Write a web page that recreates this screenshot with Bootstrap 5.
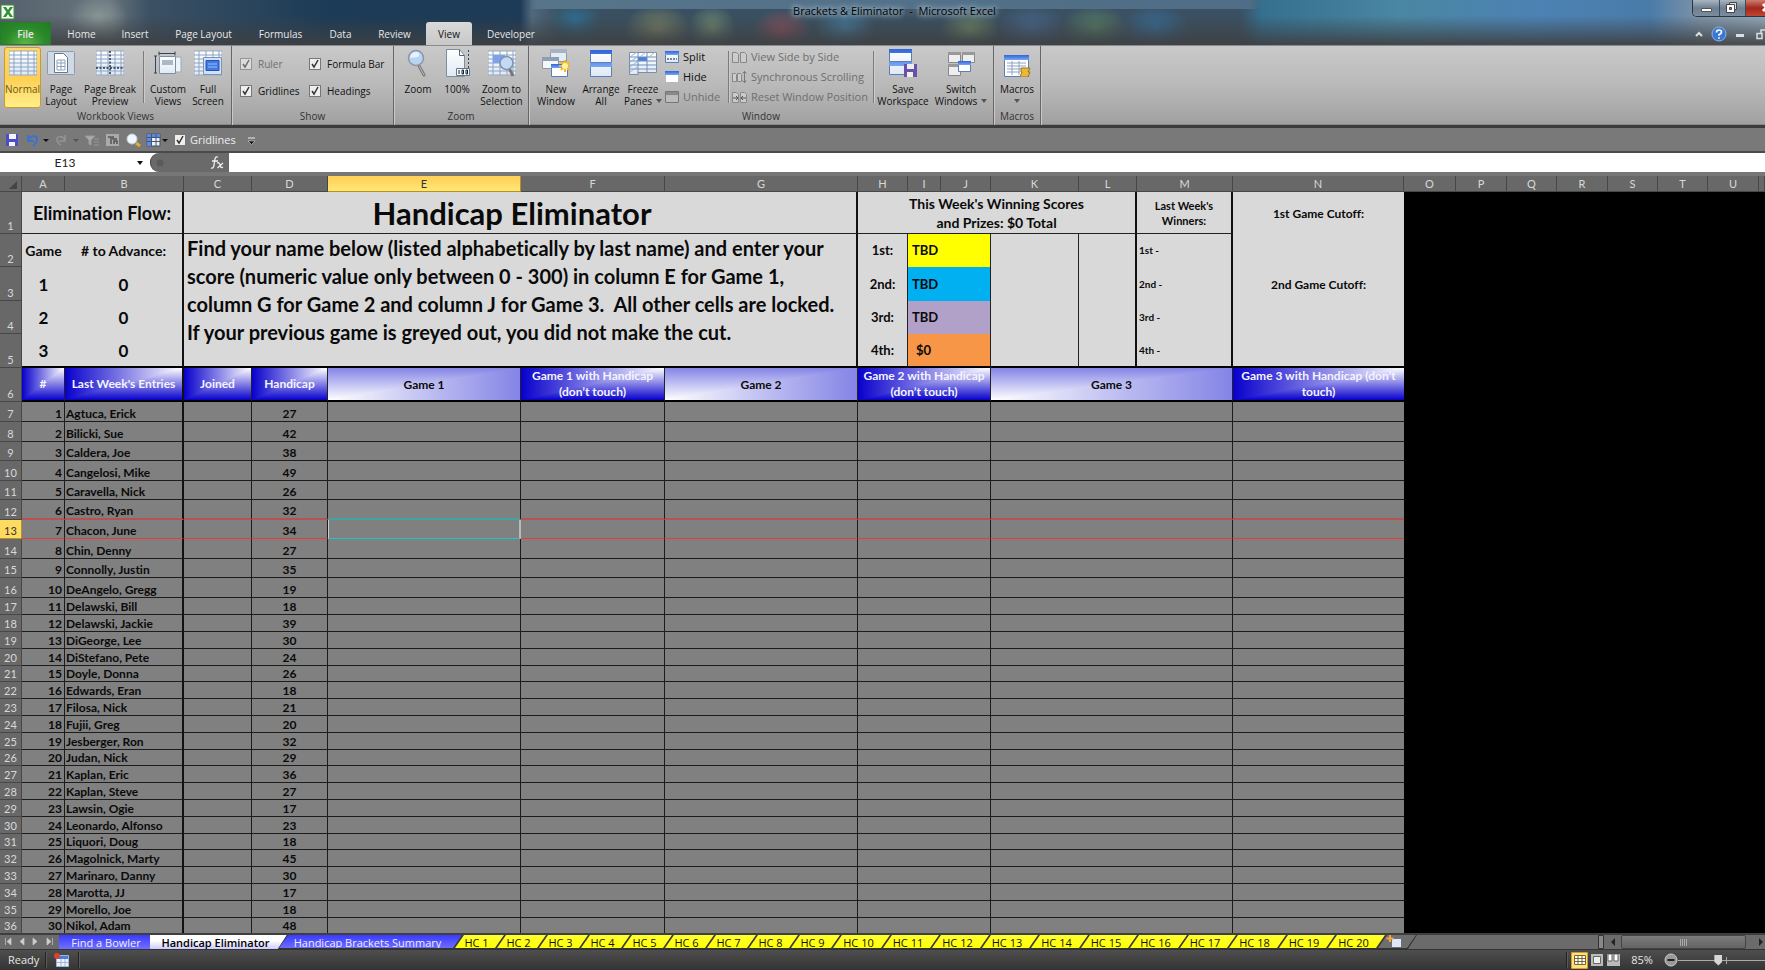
<!DOCTYPE html>
<html lang="en">
<head>
<meta charset="utf-8">
<title>Brackets &amp; Eliminator - Microsoft Excel</title>
<meta name="viewport" content="width=device-width, initial-scale=1">
<link rel="stylesheet" href="https://cdn.jsdelivr.net/npm/bootstrap@5.3.0/dist/css/bootstrap.min.css">
<style>
:root{--ui:"Open Sans","Noto Sans",sans-serif;--cell:Lato,"Open Sans",sans-serif}
body{font:11px/12px var(--ui);color:#111;background:#797979}
button{font:inherit;color:inherit;background:none;border:0;padding:0}
svg{display:block;flex:none}
/* window frame */
.frame{height:45px;background:
 linear-gradient(to bottom,transparent 35%,rgba(62,64,66,.85) 95%),
 radial-gradient(30px 24px at 98px 18px,#a9b8ae88,transparent),
 linear-gradient(to right,transparent 530px,#56748a 536px,#4f6d86 1250px,transparent 1262px) top/100% 9px no-repeat,
 radial-gradient(26px 20px at 575px 20px,#2f6d8f,transparent),
 radial-gradient(34px 26px at 658px 30px,#8c9168cc,transparent),
 radial-gradient(24px 24px at 712px 28px,#7d9a78cc,transparent),
 radial-gradient(30px 22px at 782px 31px,#a4505dcc,transparent),
 radial-gradient(30px 24px at 845px 28px,#4787b0cc,transparent),
 radial-gradient(30px 22px at 970px 30px,#7f9a68cc,transparent),
 radial-gradient(34px 24px at 1032px 28px,#4a6d9ccc,transparent),
 radial-gradient(34px 24px at 1095px 28px,#5f8a68cc,transparent),
 radial-gradient(34px 24px at 1155px 28px,#3676a8cc,transparent),
 linear-gradient(to right,#55616c 0,#68747d 110px,#3b5063 150px,#1c3b56 330px,#1d3a56 520px,#50697d 532px,#3a5060 560px,#3b5062 1240px,#35708f 1262px,#4a87a3 1400px,#4c82b4 1540px,#4a7ba8 1650px,#7d93a8 1700px,#93a9bb)}
.caption{height:22px}
.caption h1{font:11px/22px var(--ui);color:#000;margin:0;text-shadow:0 0 4px #a9bfce,0 0 6px #a9bfce,0 0 9px #a9bfce;white-space:pre}
.capbtns{width:73px;height:17px;border:1px solid #2a3540;border-top:0;border-right:0;border-radius:0 0 0 5px;box-shadow:inset 1px -1px #b5c2cd}
.capbtns button{width:26px;background:linear-gradient(#a9b6c2,#6d7f91 50%,#7a8c9e)}
.capbtns button+button{border-left:1px solid #3d4a57}
.capbtns .shut{background:linear-gradient(#cf7d72,#a2281b 50%,#c2452f)}
.tabs{height:23px;color:#e8e8e8;font-size:10px}
.tabs button{flex:none;line-height:22px;text-align:center}
.tabs .file{width:51px;font-weight:600;background:radial-gradient(at 50% 100%,#5fb84a,#2b8a2b 55%,#1f7a25);border-radius:3px 3px 0 0;box-shadow:inset 0 0 0 1px #2c7a2c}
.tabs .on{color:#111;background:linear-gradient(#d9d9d9,#c8c8c8);border-radius:3px 3px 0 0}
/* ribbon */
.ribbon{height:80px;background:linear-gradient(#c9c9c9,#b9b9b9 50%,#a0a0a0);border-top:1px solid #8a8a8a;box-shadow:inset 0 -1px #888}
.grp{border-right:1px solid #666;box-shadow:1px 0 #c9c9c9;padding-top:1px}
.grp>h2{font:10px/17px var(--ui);color:#333;margin:0;height:17px;text-align:center}
.rb{flex:none;width:40px;height:61px;display:flex;flex-direction:column;align-items:center;white-space:nowrap;font-size:10px}
.rb svg{width:28px;height:28px;margin:2px 0 6px}
.rb.hot{width:37px;background:linear-gradient(#ffd968,#fdcf55 50%,#fff08a);box-shadow:inset 0 0 0 1px #c79a37;border-radius:3px;color:#6d5317}
.rule{width:1px;height:52px;margin-top:4px;background:#7c7c7c;box-shadow:1px 0 #ccc}
.sm{display:flex;align-items:center;gap:4px;height:20px;white-space:nowrap}
.checks{padding-top:7px;gap:7px;font-size:10px}
.checks .sm{gap:6px}
.off{color:#6f6f6f}
.ck{appearance:none;width:12px;height:12px;margin:0;border:1px solid #777;background:#eee;flex:none}
.ck:checked{background:#eee url("data:image/svg+xml,%3Csvg xmlns='http://www.w3.org/2000/svg' viewBox='0 0 10 10'%3E%3Cpath d='M2 5l2 3 4-7' fill='none' stroke='%23333' stroke-width='1.5'/%3E%3C/svg%3E")}
.ck:disabled{opacity:.6}
.qat{height:28px;border-top:3px solid #3c3c3c;border-bottom:2px solid #4a4a4a;background:#797979;color:#eee}
.fx{height:23px;background:#686868;border-bottom:4px solid #777;box-shadow:inset 0 -1px #4a4a4a}
.fx input{border:0;background:#fff;padding:1px 0 0;outline:0;border-radius:0;font:12px/18px Lato,sans-serif;color:#222}
.fx .nm{width:130px;text-align:center}
.fx .pill{width:79px;background:#fff}
.fx .pill>div{background:#6a6a6a;border-radius:9px 0 0 9px;border-left:1px solid #444}
.tri{width:0;height:0;border:3px solid transparent;border-top:4px solid #111;border-bottom:0;flex:none}
.tri.dim{border-top-color:#555}
/* sheet */
.sheet{min-height:0}
.xl{table-layout:fixed;width:100%;border-collapse:separate;border-spacing:0;font:bold 13px/15px var(--cell);font-variant-ligatures:none;color:#0a0a0a}
.xl td,.xl th{padding:0;white-space:nowrap;overflow:hidden}
.xl .ch th{height:16px;background:#686868;color:#d8d8d8;font:11px/15px Lato,sans-serif;text-align:center;border-right:1px solid #474747;border-bottom:1px solid #474747}
.xl .ch .sel{background:linear-gradient(#ffcf56,#ffe873);color:#333;border-color:#b98e2d}
.xl .rh{background:#686868;color:#d8d8d8;font:11px/14px Lato,sans-serif;text-align:center;vertical-align:bottom;border-right:1px solid #474747;border-bottom:1px solid #474747}
.xl .void{background:#000;border:0}
.g td{background:#d9d9d9;vertical-align:middle}
.c{text-align:center}
.r2{border-right:2px solid #111}
.r1{border-right:1px solid #222}
.b1{border-bottom:1px solid #222}
.b2{border-bottom:2px solid #000}
.xl .h34{height:34px}.xl .h33{height:33px}.xl .h42{height:42px}
.g td.dk{color:#f4f4ff;background:linear-gradient(to left,#fff,#0800cc),linear-gradient(#fff,#0800cc);background-blend-mode:darken;font-size:12px;line-height:16px}
.g td.lt{background:linear-gradient(to right,#fff,#8484e6),linear-gradient(to top,#fff,#8484e6);background-blend-mode:darken;font-size:12px}
.xl .intro{font-size:20px;line-height:28px;vertical-align:top;padding-left:3px}
.xl .flow{font-size:18px;line-height:20px}
.xl .banner{font-size:31px;line-height:36px;padding-right:16px}
.xl .prize{font-size:14px;line-height:19px}
.xl .lastwk{font-size:11px}
.xl .cut{font-size:12px}
.xl .sml{font-size:10px;padding-left:2px}
.xl .hd{font-size:14px}
.xl .big{font-size:17px}
.d tr{height:20px}
.d tr:nth-child(-n+9):nth-child(2n+3){height:19px}
.d tr:nth-child(n+11){height:17px}
.d tr:nth-child(5n+15){height:16px}
.d td{background:#808080;border-right:1px solid #1c1c1c;border-bottom:1px solid #1c1c1c;vertical-align:bottom;font-size:12px;line-height:15px}
.d td.nmc{border-right:2px solid #111;padding-left:1px}
.d td.last{border-right:0}
.d td.num{text-align:right;padding-right:2px}
.d .pre td{border-bottom:2px solid #b85252}
.d .cur td{border-bottom-color:#e83a3a}
.d .pre td.ent{border-bottom-color:#41a3a3}
.d .cur td.ent{border-bottom-color:#20c4c4;border-right:2px solid #bbb;border-left:1px solid #ccc}
.d .cur .rh{background:#ffdc60;color:#333;border-color:#b98e2d}
/* sheet tabs and status bar */
.strip{height:17px;background:#6b6b6b;border-top:2px solid #3e3e3e;border-bottom:1px solid #333}
.edge{flex:none;margin-right:-9px;height:14px;background:#333;clip-path:polygon(9px 0,100% 0,calc(100% - 9px) 100%,0 100%)}
.edge button{width:100%;height:14px;line-height:15px;font-size:11px;padding-right:6px;background:linear-gradient(#ffff30,#ff0);clip-path:polygon(10px 0,calc(100% - 1px) 0,calc(100% - 10px) 13px,1px 13px);color:#111;text-align:center;display:block}
.edge.blue button{background:linear-gradient(#3a3aff,#7070ff);color:#eef}
.edge.flat,.edge.flat button{clip-path:polygon(0 0,100% 0,calc(100% - 9px) 100%,0 100%)}
.edge.act button{background:linear-gradient(#fff 40%,#ccccff);color:#000;font-weight:600}
.edge.new button{background:#6f6f6f}
.status{height:20px;background:linear-gradient(#4e4e4e,#343434);color:#e6e6e6}
.status .bar{width:1px;height:16px;background:#222;box-shadow:1px 0 #5a5a5a;flex:none}
.vw{width:17px;height:17px;display:flex;align-items:center;justify-content:center}
.vw.hot{background:#ffe07a;box-shadow:inset 0 0 0 1px #d39b2c;border-radius:2px}
.zoomer{appearance:none;width:87px;height:12px;background:linear-gradient(#aaa,#aaa) 0 6px/100% 1px no-repeat,linear-gradient(#aaa,#aaa) 48px 3px/1px 7px no-repeat}
.zoomer::-webkit-slider-thumb{appearance:none;width:8px;height:11px;background:#d6d6d6;clip-path:polygon(0 0,100% 0,100% 65%,50% 100%,0 65%)}
.hthumb{width:125px;height:14px;background:linear-gradient(#7c7c7c,#636363);border:1px solid #444;border-radius:2px}
</style>
</head>
<body class="vh-100 d-flex flex-column overflow-hidden">

<svg width="0" height="0" class="position-absolute" aria-hidden="true">
 <defs>
  <linearGradient id="gw" x2="0" y2="1"><stop stop-color="#fff"/><stop offset="1" stop-color="#dfe9f5"/></linearGradient>
  <linearGradient id="gb" x2="0" y2="1"><stop stop-color="#2f66d8"/><stop offset="1" stop-color="#7aa5f2"/></linearGradient>
  <symbol id="lens" viewBox="0 0 28 28"><path d="M15 17l5 9" stroke="#777" stroke-width="3" stroke-linecap="round"/><path d="M15 17l5 9" stroke="#bbb" stroke-linecap="round"/><circle cx="12" cy="9" r="7.5" fill="#b9d4f3" stroke="#8a97a8" stroke-width="1.5"/><path d="M6 9a6 6 0 0 1 6-6c3 0 4 2 3 4s-6 1-9 2z" fill="#e6f2ff"/></symbol>
  <symbol id="sheet" viewBox="0 0 28 28"><path d="M0 2h28v24H0z" fill="url(#gw)" stroke="#9ab"/><path d="M0 6h28M0 10h28M0 14h28M0 18h28M0 22h28M5 2v24M12 2v24M19 2v24M25 2v24" stroke="#8ba3c4" stroke-width="1"/></symbol>
  <symbol id="win" viewBox="0 0 14 12"><path d="M.5.5h13v11H.5z" fill="url(#gw)" stroke="#5a7fb8"/><path d="M0 0h14v4H0z" fill="url(#gb)"/></symbol>
 </defs>
</svg>

<header class="frame flex-shrink-0">
 <div class="caption d-flex position-relative">
  <svg width="16" height="16" viewBox="0 0 16 16" class="mt-1"><path d="M1 1h13v14H1z" fill="#f2f8ee" stroke="#3e8e3e"/><path d="M3 3h3l2 3 2-3h3L9.500 8l3.500 5h-3L8 10l-2 3H3l3.500-5z" fill="#2f8f33"/></svg>
  <h1 class="flex-fill text-center ps-2">Brackets &amp; Eliminator  -  Microsoft Excel</h1>
  <div class="capbtns position-absolute top-0 end-0 d-flex overflow-hidden">
   <button class="flex-shrink-0" aria-label="Minimize"><svg width="24" height="16"><path d="M8.500 8.500h10v3h-10z" fill="#fff" stroke="#555"/></svg></button>
   <button class="flex-shrink-0" aria-label="Restore"><svg width="24" height="16"><path d="M9.500 2.500h7v7h-7z" fill="#ddd" stroke="#444"/><path d="M6.500 4.500h8v8h-8z" fill="#fff" stroke="#444"/><path d="M9.500 7.500h2v2h-2z" stroke="#444" fill="#889"/></svg></button>
   <button class="flex-shrink-0 shut" aria-label="Close"><svg width="24" height="16"><path d="M17 4l7 7M24 4l-7 7" stroke="#fff" stroke-width="3"/></svg></button>
  </div>
 </div>
 <nav class="tabs d-flex">
  <button class="file">File</button>
  <button style="width:61px">Home</button>
  <button style="width:46px">Insert</button>
  <button style="width:91px">Page Layout</button>
  <button style="width:63px">Formulas</button>
  <button style="width:57px">Data</button>
  <button style="width:51px">Review</button>
  <div style="width:6px"></div>
  <button class="on" style="width:46px">View</button>
  <button style="width:78px">Developer</button>
  <div class="ms-auto d-flex align-items-center overflow-hidden" style="width:73px">
   <svg width="73" height="20" viewBox="0 0 73 20"><path d="M4 12l3-3 3 3" fill="none" stroke="#ddd" stroke-width="2"/><circle cx="27" cy="10" r="7" fill="#3c78d2" stroke="#8bb3ec"/><path d="M24.500 8.500q0-2.500 2.500-2.500t2.500 2q0 1.500-2.500 2.800v1M27 13.200v1.600" fill="none" stroke="#fff" stroke-width="1.700"/><path d="M44 10h8v3h-8z" fill="#ddd"/><path d="M65 9.500h5v5h-5zM69 9V6h5" fill="none" stroke="#ddd" stroke-width="1.500"/></svg>
  </div>
 </nav>
</header>

<section class="ribbon d-flex flex-shrink-0">
 <div class="grp d-flex flex-column" style="width:232px">
  <div class="d-flex flex-fill ps-1">
   <button class="rb hot"><svg><use href="#sheet"/></svg>Normal</button>
   <button class="rb"><svg viewBox="0 0 28 28"><rect x=".5" y="2.500" width="27" height="23" rx="1" fill="#cfdae6" stroke="#8d9cad"/><path d="M7.500 4.500h9l4 4v15h-13z" fill="#fff" stroke="#66788e"/><path d="M10 11h8v10h-8zM10 14h8M10 17.500h8M14 11v10" fill="none" stroke="#8fa2ba"/></svg>Page<br>Layout</button>
   <button class="rb" style="width:58px"><svg viewBox="0 0 28 28"><use href="#sheet"/><path d="M14 2v24M0 19h28" stroke="#234" stroke-width="1.500" stroke-dasharray="2 1.500"/></svg>Page Break<br>Preview</button>
   <div class="rule mx-1"></div>
   <button class="rb"><svg viewBox="0 0 28 28"><path d="M8 8h19v15H8z" fill="#eef3f8" stroke="#9ab"/><path d="M5.500 7.500h16v17h-16z" fill="url(#gw)" stroke="#7d8ea3"/><path d="M8 11h11v5H8z" fill="#aab8c8"/><path d="M5 4.500h16M5 2.500v4M21 2.500v4M1.500 7v17M0 7h3M0 24h3" stroke="#345" fill="none"/></svg>Custom<br>Views</button>
   <button class="rb"><svg viewBox="0 0 28 28"><use href="#sheet"/><path d="M9.500 8.500h18v17h-18z" fill="#d3e0f3" stroke="#7d93b5"/><path d="M12 11.500h13v10H12z" fill="#3f7be2" stroke="#2253b5"/><path d="M14 15h9M14 18h9" stroke="#9ec1ff"/></svg>Full<br>Screen</button>
  </div>
  <h2>Workbook Views</h2>
 </div>
 <div class="grp d-flex flex-column" style="width:162px">
  <div class="flex-fill d-flex ps-2 gap-2">
   <div class="checks d-flex flex-column" style="width:61px">
    <label class="sm off"><input type="checkbox" class="ck" checked disabled>Ruler</label>
    <label class="sm"><input type="checkbox" class="ck" checked>Gridlines</label>
   </div>
   <div class="checks d-flex flex-column">
    <label class="sm"><input type="checkbox" class="ck" checked>Formula Bar</label>
    <label class="sm"><input type="checkbox" class="ck" checked>Headings</label>
   </div>
  </div>
  <h2>Show</h2>
 </div>
 <div class="grp d-flex flex-column" style="width:135px">
  <div class="d-flex flex-fill ps-1">
   <button class="rb"><svg><use href="#lens"/></svg>Zoom</button>
   <button class="rb" style="width:38px"><svg viewBox="0 0 28 28"><path d="M25.500 1v26" stroke="#345" stroke-dasharray="2 2"/><path d="M3.500.5h13l5 6v21h-18z" fill="url(#gw)" stroke="#7d8ea3"/><path d="M16.500.5v6h5" fill="none" stroke="#567"/><path d="M13.500 19.500h13v7h-13z" fill="#fff" stroke="#678"/><path d="M16 21v4M19 21h1.500v4H19zM23 21h1.500v4H23z" fill="none" stroke="#123"/></svg>100%</button>
   <button class="rb" style="width:51px"><svg viewBox="0 0 28 28"><use href="#sheet"/><path d="M5 6h12v8H5z" fill="#7ba2ea"/><path d="M21 19l4 8" stroke="#777" stroke-width="3"/><circle cx="18.500" cy="14" r="6.500" fill="#c2daf5" stroke="#8593a5" stroke-width="1.500"/></svg>Zoom to<br>Selection</button>
  </div>
  <h2>Zoom</h2>
 </div>
 <div class="grp d-flex flex-column" style="width:465px">
  <div class="d-flex flex-fill ps-1">
   <button class="rb" style="width:46px"><svg viewBox="0 0 28 28"><path d="M8.500.5h16v12h-16z" fill="#e6ecf3" stroke="#8b98a8"/><path d="M8 0h17v4H8z" fill="#a5b3c5"/><path d="M.5 8.500h16v11H.5z" fill="#f5f8fb" stroke="#8b98a8"/><path d="M0 8h17v4H0z" fill="#8e9fb5"/><path d="M9.500 15.500h16v12h-16z" fill="#fff" stroke="#5a7fb8"/><path d="M9 15h17v4H9z" fill="url(#gb)"/><path d="M23 11v12M17 17h12M19 13l8 8M27 13l-8 8" stroke="#f5b81e" stroke-width="2"/><circle cx="23" cy="17" r="3" fill="#fff3a0"/></svg>New<br>Window</button>
   <button class="rb" style="width:44px"><svg viewBox="0 0 28 28"><path d="M3.500 1.500h21v12h-21zM3.500 14.500h21v13h-21z" fill="url(#gw)" stroke="#5a7fb8"/><path d="M3 1h22v4H3zM3 14h22v4H3z" fill="url(#gb)"/></svg>Arrange<br>All</button>
   <button class="rb"><svg viewBox="0 0 28 28"><path d="M.5 3.500h27v20H9v2H.500z" fill="url(#gw)" stroke="#7d8ea3"/><path d="M9 8h9v4H9z" fill="#4a7fe0"/><path d="M0 8h28M0 12h28M0 16h28M0 20h28M9 3v21M18 3v21" stroke="#6f8fbc"/><path d="M1 8l7-5M1 13l7-5M1 18l7-5M1 23l7-5M11 8l6-5M20 8l6-5" stroke="#9bb3d2"/></svg>Freeze<span class="d-flex align-items-center gap-1">Panes <i class="tri dim"></i></span></button>
   <div style="width:65px;padding-left:2px">
    <button class="sm"><svg width="14" height="12"><use href="#win"/><path d="M2 8h10" stroke="#123" stroke-dasharray="2 1"/></svg>Split</button>
    <button class="sm"><svg width="14" height="12" viewBox="0 0 14 12"><path d="M.5.500h13v11H.500z" fill="#fff" stroke="#999" stroke-dasharray="1 1"/><path d="M0 0h14v4H0z" fill="url(#gb)"/></svg>Hide</button>
    <button class="sm off" disabled><svg width="14" height="12" viewBox="0 0 14 12"><path d="M.5.500h13v11H.500z" fill="#bbb" stroke="#777"/><path d="M1 1h12v3H1z" fill="#888"/></svg>Unhide</button>
   </div>
   <div class="rule"></div>
   <div style="width:144px;padding-left:3px">
    <button class="sm off" disabled><svg width="15" height="12" viewBox="0 0 15 12"><path d="M.5 1.500h4l2 2v8h-6zM8.500 1.500h4l2 2v8h-6z" fill="#ccc" stroke="#888"/></svg>View Side by Side</button>
    <button class="sm off" disabled><svg width="15" height="12" viewBox="0 0 15 12"><path d="M.5 2.500h3l1 1v7h-4zM5.500 2.500h3l1 1v7h-4z" fill="#ccc" stroke="#888"/><path d="M12.500 0v12M10.500 2.500l2-2 2 2M10.500 9.500l2 2 2-2" fill="none" stroke="#777"/></svg>Synchronous Scrolling</button>
    <button class="sm off" disabled><svg width="15" height="12" viewBox="0 0 15 12"><path d="M.5 1.500h4l2 2v8h-6zM8.500 1.500h4l2 2v8h-6z" fill="#ccc" stroke="#888"/><path d="M1 7h5M4 5l2 2-2 2M14 7H9M11 5L9 7l2 2" fill="none" stroke="#555"/></svg>Reset Window Position</button>
   </div>
   <div class="rule"></div>
   <button class="rb" style="width:58px"><svg viewBox="0 0 28 28"><path d="M.5.500h22v12h-22zM.500 13.500h22v12h-22z" fill="url(#gw)" stroke="#5a7fb8"/><path d="M0 0h23v4H0zM0 13h23v4H0z" fill="url(#gb)"/><path d="M15 15h13v13H15z" fill="#6a50a8"/><path d="M18 15h7v5h-7zM18 23h6v5h-6z" fill="#eee"/></svg>Save<br>Workspace</button>
   <button class="rb" style="width:58px"><svg viewBox="0 0 28 28"><path d="M1.500 3.500h12v10h-12zM15.500 3.500h12v10h-12zM1.500 15.500h12v11h-12z" fill="#eee" stroke="#888"/><path d="M1 3h13v3H1zM15 3h13v3H15zM1 15h13v3H1z" fill="#999"/><path d="M11.500 12.500h12v10h-12z" fill="#fff" stroke="#5a7fb8"/><path d="M11 12h13v4H11z" fill="url(#gb)"/></svg>Switch<span class="d-flex align-items-center gap-1">Windows <i class="tri dim"></i></span></button>
  </div>
  <h2>Window</h2>
 </div>
 <div class="grp d-flex flex-column align-items-center" style="width:47px">
  <div class="flex-fill"><button class="rb"><svg viewBox="0 0 28 28"><path d="M1.500 6.500h24v21h-24z" fill="#fff" stroke="#5a7fb8"/><path d="M1 6h25v5H1z" fill="url(#gb)"/><path d="M4 14h19M4 17h19M4 20h15M4 23h13M9 12v14M16 12v14" stroke="#8ba3c4"/><path d="M18 19h9l-2 4h2l-2 5h-8l2-5h-1z" fill="#e8b93c" stroke="#9a741c"/></svg>Macros<i class="tri dim mt-1"></i></button></div>
  <h2>Macros</h2>
 </div>
</section>

<div class="qat d-flex align-items-center flex-shrink-0">
 <svg width="170" height="20" viewBox="0 0 170 20"><path d="M6 4h12v12H6z" fill="#4a4fc8"/><path d="M9 4h7v5H9zM9 12h6v4H9z" fill="#f3f3ff"/>
 <path d="M28 5v6h6M28 10c3-5 10-5 9 0-.5 3-2 4-4 6" fill="none" stroke="#3f6fd0" stroke-width="2"/><path d="M43 9h6l-3 3z" fill="#111"/>
 <path d="M65 5v6h-6M65 10c-3-5-9-4-8 0 .5 3 2 4 4 5" fill="none" stroke="#949494" stroke-width="1.500"/><path d="M73 9h6l-3 3z" fill="#555"/>
 <path d="M85 6h10l-4 4v5l-2-1v-4zM94 9h5M94 12h5M94 15h5" fill="#aaa" stroke="#999"/>
 <path d="M106 4h13v12h-13z" fill="#aaa"/><path d="M108 7h3v7M113 6v3h4M114 14v-3h3v3" fill="none" stroke="#555" stroke-width="1.500"/>
 <path d="M136 13l4 3" stroke="#e0a92c" stroke-width="3"/><circle cx="132" cy="9" r="5" fill="#eef6ff" stroke="#bcd"/>
 <path d="M147 4h13v12h-13z" fill="#eef3fb" stroke="#456"/><path d="M147 4h13v3h-13zM147 4h4v12h-4z" fill="#5a8ae0"/><path d="M147 7.500h13M147 11.500h13M151.500 4v12M156 4v12" stroke="#457"/><path d="M162 9h6l-3 3z" fill="#111"/></svg>
 <label class="sm ps-1"><input type="checkbox" class="ck" checked>Gridlines</label>
 <svg width="24" height="12" viewBox="0 0 24 12"><path d="M12 4h7" stroke="#eee"/><path d="M12 7h7l-3.500 3.500z" fill="#111" stroke="#eee" stroke-width=".5"/></svg>
</div>

<div class="fx d-flex flex-shrink-0">
 <input class="nm" value="E13" aria-label="Name Box">
 <div class="bg-white d-flex align-items-center justify-content-center" style="width:20px"><i class="tri"></i></div>
 <div class="pill d-flex"><div class="flex-fill d-flex align-items-center justify-content-between ps-1">
  <svg width="10" height="10"><circle cx="5" cy="5" r="3.500" fill="#5a5a5a"/></svg>
  <svg width="20" height="16" viewBox="0 0 20 16"><path d="M9 2c-3-1-3 2-3.500 5S5 14 2 13M3 6h6M8 8c2-1 3 1 3.500 3s1 2 2.500 1M14 8l-5.500 5" fill="none" stroke="#eee" stroke-width="1.300"/></svg></div></div>
 <input class="flex-fill" aria-label="Formula Bar">
</div>

<main class="sheet flex-fill overflow-hidden">
<table class="xl">
 <colgroup><col style="width:22px"><col style="width:43px"><col style="width:119px"><col style="width:68px"><col style="width:76px"><col style="width:193px"><col style="width:144px"><col style="width:193px"><col style="width:50px"><col style="width:33px"><col style="width:50px"><col style="width:88px"><col style="width:58px"><col style="width:96px"><col style="width:171px"><col style="width:52px"><col style="width:51px"><col style="width:50px"><col style="width:51px"><col style="width:50px"><col style="width:50px"><col style="width:51px"><col></colgroup>
 <thead>
 <tr class="ch"><th><svg width="18" height="12"><path d="M17 3v8H9z" fill="#444"/></svg></th><th>A</th><th>B</th><th>C</th><th>D</th><th class="sel">E</th><th>F</th><th>G</th><th>H</th><th>I</th><th>J</th><th>K</th><th>L</th><th>M</th><th>N</th><th>O</th><th>P</th><th>Q</th><th>R</th><th>S</th><th>T</th><th>U</th><th></th></tr>
 </thead>
 <tbody class="g">
 <tr><th class="rh h42">1</th><td class="c b1 r2 flow" colspan="2">Elimination Flow:</td><td class="c b1 r2 banner" colspan="5">Handicap Eliminator</td><td class="c b1 r2 prize" colspan="5">This Week's Winning Scores<br>and Prizes: $0 Total</td><td class="c b1 r2 lastwk">Last Week's<br>Winners:</td><td class="c cut">1st Game Cutoff:</td><td class="void" colspan="8" rowspan="6"></td></tr>
 <tr><th class="rh h33">2</th><td class="c hd">Game</td><td class="c r2 hd"># to Advance:</td><td colspan="5" rowspan="4" class="intro b2 r2">Find your name below (listed alphabetically by last name) and enter your<br>score (numeric value only between 0 - 300) in column E for Game 1,<br>column G for Game 2 and column J for Game 3.&nbsp; All other cells are locked.<br>If your previous game is greyed out, you did not make the cut.</td><td class="c r1">1st:</td><td class="r1 ps-1" colspan="2" style="background:#ff0">TBD</td><td class="r1 b2" rowspan="4"></td><td class="r2 b2" rowspan="4"></td><td class="r2 sml">1st -</td><td></td></tr>
 <tr><th class="rh h34">3</th><td class="c big">1</td><td class="c r2 big">0</td><td class="c r1">2nd:</td><td class="r1 ps-1" colspan="2" style="background:#00b0f0">TBD</td><td class="r2 sml">2nd -</td><td class="c cut">2nd Game Cutoff:</td></tr>
 <tr><th class="rh h33">4</th><td class="c big">2</td><td class="c r2 big">0</td><td class="c r1">3rd:</td><td class="r1 ps-1" colspan="2" style="background:#b1a0c7">TBD</td><td class="r2 sml">3rd -</td><td></td></tr>
 <tr><th class="rh h34">5</th><td class="c b2 big">3</td><td class="c r2 b2 big">0</td><td class="c r1 b2">4th:</td><td class="r1 b2 ps-2" colspan="2" style="background:#f79646">$0</td><td class="r2 b2 sml">4th -</td><td class="b2"></td></tr>
 <tr><th class="rh h34">6</th><td class="c dk b2 r1">#</td><td class="c dk b2 r2">Last Week's Entries</td><td class="c dk b2 r1">Joined</td><td class="c dk b2 r1">Handicap</td><td class="c lt b2 r1">Game 1</td><td class="c dk b2 r1">Game 1 with Handicap<br>(don’t touch)</td><td class="c lt b2 r1">Game 2</td><td class="c dk b2 r1" colspan="3">Game 2 with Handicap<br>(don’t touch)</td><td class="c lt b2 r1" colspan="3">Game 3</td><td class="c dk b2">Game 3 with Handicap (don’t<br>touch)</td></tr>
 </tbody>
 <tbody class="d" id="rows"></tbody>
</table>
</main>

<div class="strip d-flex flex-shrink-0" id="strip">
 <svg width="59" height="14" viewBox="0 0 59 14"><path d="M5.500 3v7M11 3v7L7 6.500zM24 3v7l-4-3.500zM33 3v7l4-3.500zM47 3v7l4-3.500zM52.500 3v7" fill="#ccc" stroke="#ccc" stroke-width=".7"/></svg>
 <div class="edge flat blue" style="width:100px"><button>Find a Bowler</button></div>
 <div class="edge flat act position-relative" style="width:137px"><button>Handicap Eliminator</button></div>
 <div class="edge blue" style="width:185px"><button>Handicap Brackets Summary</button></div>
</div>

<footer class="status d-flex align-items-center flex-shrink-0 ps-2">
 <span style="width:37px">Ready</span><div class="bar me-2"></div>
 <svg width="16" height="14" viewBox="0 0 16 14"><path d="M2.500 2.500h12v11h-12z" fill="#eef3fb" stroke="#9ab4da"/><path d="M3 3h11v3H3z" fill="#4a7fe0"/><path d="M3 9.500h11M7 6v7M11 6v7" stroke="#9ab4da"/><circle cx="3" cy="3" r="3" fill="#d8442e"/></svg>
 <div class="bar ms-2"></div>
 <div class="bar ms-auto me-1"></div>
 <button class="vw hot" aria-label="Normal"><svg width="12" height="10"><path d="M.5.500h11v9H.500zM.500 3.500h11M.500 6.500h11M4 0v10M8 0v10" fill="#fff" stroke="#776633"/></svg></button>
 <button class="vw" aria-label="Page Layout"><svg width="12" height="12"><path d="M0 0h12v12H0z" fill="#bbb"/><path d="M2.500 2.500h7v7h-7z" fill="#eee" stroke="#666"/></svg></button>
 <button class="vw" aria-label="Page Break Preview"><svg width="13" height="12"><path d="M0 0h13v12H0z" fill="#bbb"/><path d="M1 0h4v7H1zM7 0h4v7H7z" fill="#fff" stroke="#666"/></svg></button>
 <span class="text-center" style="width:40px">85%</span>
 <button aria-label="Zoom out"><svg width="16" height="16"><circle cx="9" cy="8" r="6" fill="#999" stroke="#ccc"/><path d="M5.500 8h7" stroke="#222" stroke-width="2"/></svg></button>
 <input type="range" class="zoomer" min="0" max="100" value="46" aria-label="Zoom">
</footer>

<script>
const people=[["Agtuca, Erick",27],["Bilicki, Sue",42],["Caldera, Joe",38],["Cangelosi, Mike",49],["Caravella, Nick",26],["Castro, Ryan",32],["Chacon, June",34],["Chin, Denny",27],["Connolly, Justin",35],["DeAngelo, Gregg",19],["Delawski, Bill",18],["Delawski, Jackie",39],["DiGeorge, Lee",30],["DiStefano, Pete",24],["Doyle, Donna",26],["Edwards, Eran",18],["Filosa, Nick",21],["Fujii, Greg",20],["Jesberger, Ron",32],["Judan, Nick",29],["Kaplan, Eric",36],["Kaplan, Steve",27],["Lawsin, Ogie",17],["Leonardo, Alfonso",23],["Liquori, Doug",18],["Magolnick, Marty",45],["Marinaro, Danny",30],["Marotta, JJ",17],["Morello, Joe",18],["Nikol, Adam",48]];
document.getElementById("rows").innerHTML=people.map(([n,h],i)=>
 `<tr class="${i===5?"pre":i===6?"cur":""}"><th class="rh">${i+7}</th><td class="num">${i+1}</td><td class="nmc">${n}</td><td></td><td class="c">${h}</td><td class="ent"></td><td></td><td></td><td colspan="3"></td><td colspan="3"></td><td class="last"></td><th class="void" colspan="8"></th></tr>`).join("");
let tabs="";
for(let n=1;n<=20;n++){const w=n<10?51:n%2?58:59;tabs+=`<div class="edge" style="width:${w}px"><button>HC ${n}</button></div>`}
tabs+=`<div class="edge new" style="width:40px"><button aria-label="Insert Worksheet"><svg width="40" height="14"><path d="M15 4h9v8h-9z" fill="#dfe8f8"/><path d="M13 0v7M9.500 3.500h7" stroke="#f0a63c" stroke-width="2"/></svg></button></div>
<svg class="ms-auto" width="24" height="14"><path d="M1.500.500h5v13h-5z" fill="#888" stroke="#333"/><path d="M18 3v8l-4-4z" fill="#222"/></svg>
<div class="hthumb d-flex align-items-center justify-content-center"><svg width="8" height="7"><path d="M.500 0v7M2.500 0v7M4.500 0v7M6.500 0v7" stroke="#aaa"/></svg></div>
<svg width="19" height="14"><path d="M13 3v8l4-4z" fill="#222"/></svg>`;
document.getElementById("strip").insertAdjacentHTML("beforeend",tabs);
</script>
<script src="https://cdn.jsdelivr.net/npm/bootstrap@5.3.0/dist/js/bootstrap.bundle.min.js"></script>
</body>
</html>
